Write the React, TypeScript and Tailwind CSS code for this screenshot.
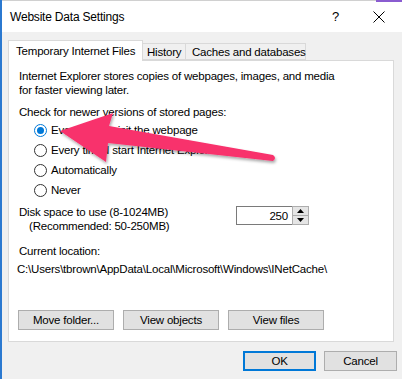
const font = { fontFamily: '"Liberation Sans", Arial, sans-serif' };

const Radio = ({ label, checked = false }: { label: string; checked?: boolean }) => (
  <div className="flex items-center h-[20px]">
    <span
      className={`w-[13px] h-[13px] rounded-full border flex items-center justify-center bg-white ${
        checked ? "border-[#0078d7]" : "border-[#333333]"
      }`}
    >
      {checked && <span className="w-[7px] h-[7px] rounded-full bg-[#0078d7]" />}
    </span>
    <span className="ml-[4px]">{label}</span>
  </div>
);

const Btn = ({ label, w = "w-[96px]" }: { label: string; w?: string }) => (
  <div className={`${w} h-[20px] bg-[#e1e1e1] border border-[#adadad] flex items-center justify-center`}>
    {label}
  </div>
);

export default function App() {
  return (
    <div
      className="relative w-[402px] h-[379px] overflow-hidden whitespace-nowrap bg-[#f0f0f0] text-[11.5px] tracking-[-0.2px] leading-[14px] text-black border-l-2 border-[#2b79d0]"
      style={font}
    >
      {/* title bar */}
      <div className="h-[32px] bg-white border-t border-[#d0d0d0] flex items-center pl-[8px]">
        <span className="text-[12px]">Website Data Settings</span>
        <span className="ml-auto mr-[34px] text-[13px]">?</span>
        <svg width="12" height="12" viewBox="0 0 12 12" className="mr-[17px]">
          <path d="M0.5 0.5 L11.5 11.5 M11.5 0.5 L0.5 11.5" stroke="#000" strokeWidth="1" />
        </svg>
      </div>
      <div className="absolute top-0 right-0 w-[26px] h-[2px] bg-[#8a5cd0]" />

      {/* tabs */}
      <div className="flex items-end ml-[6px] mt-[7px] h-[21px]">
        <div className="h-[21px] w-[135px] bg-white border border-b-0 border-[#d9d9d9] pl-[7px] pt-[3px] relative z-10 -mb-px">
          Temporary Internet Files
        </div>
        <div className="h-[17px] w-[43px] bg-[#f0f0f0] border border-l-0 border-[#d9d9d9] pl-[4px] pt-[1px]">History</div>
        <div className="h-[17px] w-[120px] bg-[#f0f0f0] border border-l-0 border-[#d9d9d9] pl-[6px] pt-[1px]">
          Caches and databases
        </div>
      </div>

      {/* panel */}
      <div className="ml-[6px] w-[386px] h-[282px] bg-white border border-[#d9d9d9] px-[10px] pt-[8px]">
        <p>Internet Explorer stores copies of webpages, images, and media</p>
        <p>for faster viewing later.</p>
        <p className="mt-[8px]">Check for newer versions of stored pages:</p>
        <div className="mt-[1px] pl-[15px]">
          <Radio label="Every time I visit the webpage" checked />
          <Radio label="Every time I start Internet Explorer" />
          <Radio label="Automatically" />
          <Radio label="Never" />
        </div>
        <div className="flex mt-[5px]">
          <div>
            <p>Disk space to use (8-1024MB)</p>
            <p className="pl-[10px]">(Recommended: 50-250MB)</p>
          </div>
          <div className="ml-auto mr-[74px] mt-[1px] flex h-[19px]">
            <div className="w-[56px] h-[19px] border border-[#7a7a7a] border-r-0 flex items-center justify-end pr-[4px]">
              250
            </div>
            <div className="w-[17px] h-[19px] border border-[#adadad] bg-[#e5e5e5] flex flex-col">
              <div className="flex-1 flex items-center justify-center border-b border-[#adadad]">
                <svg width="7" height="4" viewBox="0 0 7 4">
                  <path d="M0 4 L3.5 0 L7 4 Z" fill="#000" />
                </svg>
              </div>
              <div className="flex-1 flex items-center justify-center">
                <svg width="7" height="4" viewBox="0 0 7 4">
                  <path d="M0 0 L3.5 4 L7 0 Z" fill="#000" />
                </svg>
              </div>
            </div>
          </div>
        </div>
        <p className="mt-[11px]">Current location:</p>
        <p className="mt-[4px] -ml-[2px]">C:\Users\tbrown\AppData\Local\Microsoft\Windows\INetCache\</p>
        <div className="flex gap-[9px] mt-[34px] ml-[-1px]">
          <Btn label="Move folder..." />
          <Btn label="View objects" />
          <Btn label="View files" />
        </div>
      </div>

      {/* dialog buttons */}
      <div className="flex justify-end gap-[8px] mt-[9px] mr-[5px]">
        <div className="w-[73px] h-[20px] bg-[#e1e1e1] border-2 border-[#0078d7] flex items-center justify-center">OK</div>
        <Btn label="Cancel" w="w-[73px]" />
      </div>

      {/* annotation arrow */}
      <svg className="absolute left-0 top-0 pointer-events-none" width="402" height="379" viewBox="0 0 402 379">
        <defs>
          <filter id="sh" x="-10%" y="-10%" width="130%" height="140%">
            <feDropShadow dx="1" dy="2" stdDeviation="1.5" floodColor="#000" floodOpacity="0.35" />
          </filter>
        </defs>
        <path
          d="M58 131 L111 113 L107 126 L271 155 Q275 158 271 161 L106 143 L104 162 Z"
          fill="#f8306c"
          filter="url(#sh)"
        />
      </svg>
    </div>
  );
}
